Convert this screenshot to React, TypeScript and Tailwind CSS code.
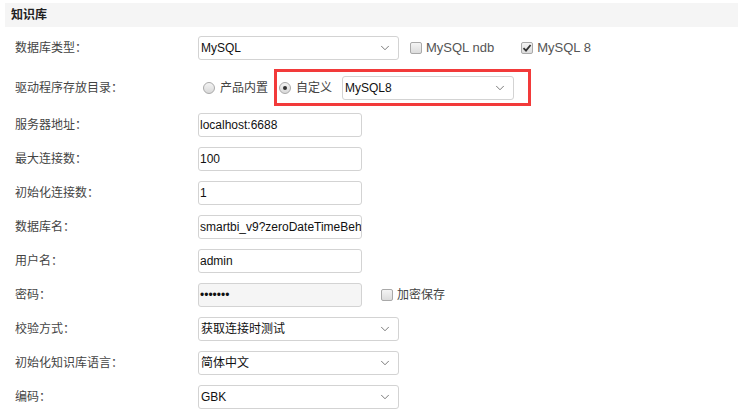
import { ChevronDown } from 'lucide-react'

const FONT = 'font-["Liberation_Sans","Noto_Sans_CJK_SC",sans-serif]'

function Checkbox({ checked = false }: { checked?: boolean }) {
  return (
    <span className="relative w-[12px] h-[12px] shrink-0 rounded-[2px] border border-[#a9a9a9] bg-gradient-to-b from-[#f4f4f4] to-[#dcdcdc]">
      {checked && (
        <svg viewBox="0 0 12 12" className="absolute -left-px -top-px w-[12px] h-[12px]">
          <path d="M2.5 6.2 L5 8.6 L9.6 3" fill="none" stroke="#333" strokeWidth="1.8" />
        </svg>
      )}
    </span>
  )
}

function Radio({ checked = false }: { checked?: boolean }) {
  return (
    <span className="flex items-center justify-center w-[12px] h-[12px] shrink-0 rounded-full border border-[#a9a9a9] bg-gradient-to-b from-[#f4f4f4] to-[#d9d9d9]">
      {checked && <span className="w-[4px] h-[4px] rounded-full bg-[#333]" />}
    </span>
  )
}

function Select({ value, width = 'w-[201px]' }: { value: string; width?: string }) {
  return (
    <div className={`${width} h-[24px] flex items-center justify-between pl-[2px] pr-[6px] border border-[#d3d3d3] rounded-[3px] bg-white text-[12px] text-[#111]`}>
      <span>{value}</span>
      <ChevronDown size={14} strokeWidth={1.2} className="text-[#444]" />
    </div>
  )
}

function Input({ value, disabled = false }: { value: string; disabled?: boolean }) {
  return (
    <div className={`w-[164px] h-[24px] flex items-center pl-[1px] overflow-hidden whitespace-nowrap border border-[#d3d3d3] rounded-[3px] text-[12px] text-[#111] ${disabled ? 'bg-[#f5f5f5]' : 'bg-white'}`}>
      {value}
    </div>
  )
}

function Row({ label, children, className = '' }: { label: string; children: React.ReactNode; className?: string }) {
  return (
    <div className={`flex items-center pl-[15px] ${className}`}>
      <div className="w-[183px] shrink-0 text-[12px] text-[#444]">{label}</div>
      {children}
    </div>
  )
}

export default function App() {
  return (
    <div className={`w-[738px] h-[414px] bg-white pt-[3px] overflow-hidden ${FONT}`}>
      <div className="ml-[5px] h-[24px] flex items-center pl-[6px] bg-[#f5f5f5] text-[12px] font-bold text-[#222]">
        知识库
      </div>

      <Row label="数据库类型：" className="mt-[9px]">
        <Select value="MySQL" />
        <div className="flex items-center gap-[4px] ml-[11px] text-[13px] text-[#555]">
          <Checkbox />
          <span>MySQL ndb</span>
        </div>
        <div className="flex items-center gap-[4px] ml-[27px] text-[13px] text-[#555]">
          <Checkbox checked />
          <span>MySQL 8</span>
        </div>
      </Row>

      <Row label="驱动程序存放目录：" className="mt-[9px]">
        <div className="flex items-center gap-[5px] ml-[5px] text-[12px] text-[#444]">
          <Radio />
          <span>产品内置</span>
        </div>
        <div className="flex items-center ml-[6px] w-[257px] h-[37px] pl-[2px] pt-[1px] border-[3px] border-[#f23a3a]">
          <Radio checked />
          <span className="ml-[5px] text-[12px] text-[#444]">自定义</span>
          <div className="ml-[10px]">
            <Select value="MySQL8" width="w-[172px]" />
          </div>
        </div>
      </Row>

      <div className="flex flex-col gap-[10px] mt-[7px]">
        <Row label="服务器地址：">
          <Input value="localhost:6688" />
        </Row>
        <Row label="最大连接数：">
          <Input value="100" />
        </Row>
        <Row label="初始化连接数：">
          <Input value="1" />
        </Row>
        <Row label="数据库名：">
          <Input value="smartbi_v9?zeroDateTimeBehavior=convertToNull" />
        </Row>
        <Row label="用户名：">
          <Input value="admin" />
        </Row>
        <Row label="密码：">
          <Input value="•••••••" disabled />
          <div className="flex items-center gap-[4px] ml-[19px] text-[12px] text-[#444]">
            <Checkbox />
            <span>加密保存</span>
          </div>
        </Row>
        <Row label="校验方式：">
          <Select value="获取连接时测试" />
        </Row>
        <Row label="初始化知识库语言：">
          <Select value="简体中文" />
        </Row>
        <Row label="编码：">
          <Select value="GBK" />
        </Row>
      </div>
    </div>
  )
}
